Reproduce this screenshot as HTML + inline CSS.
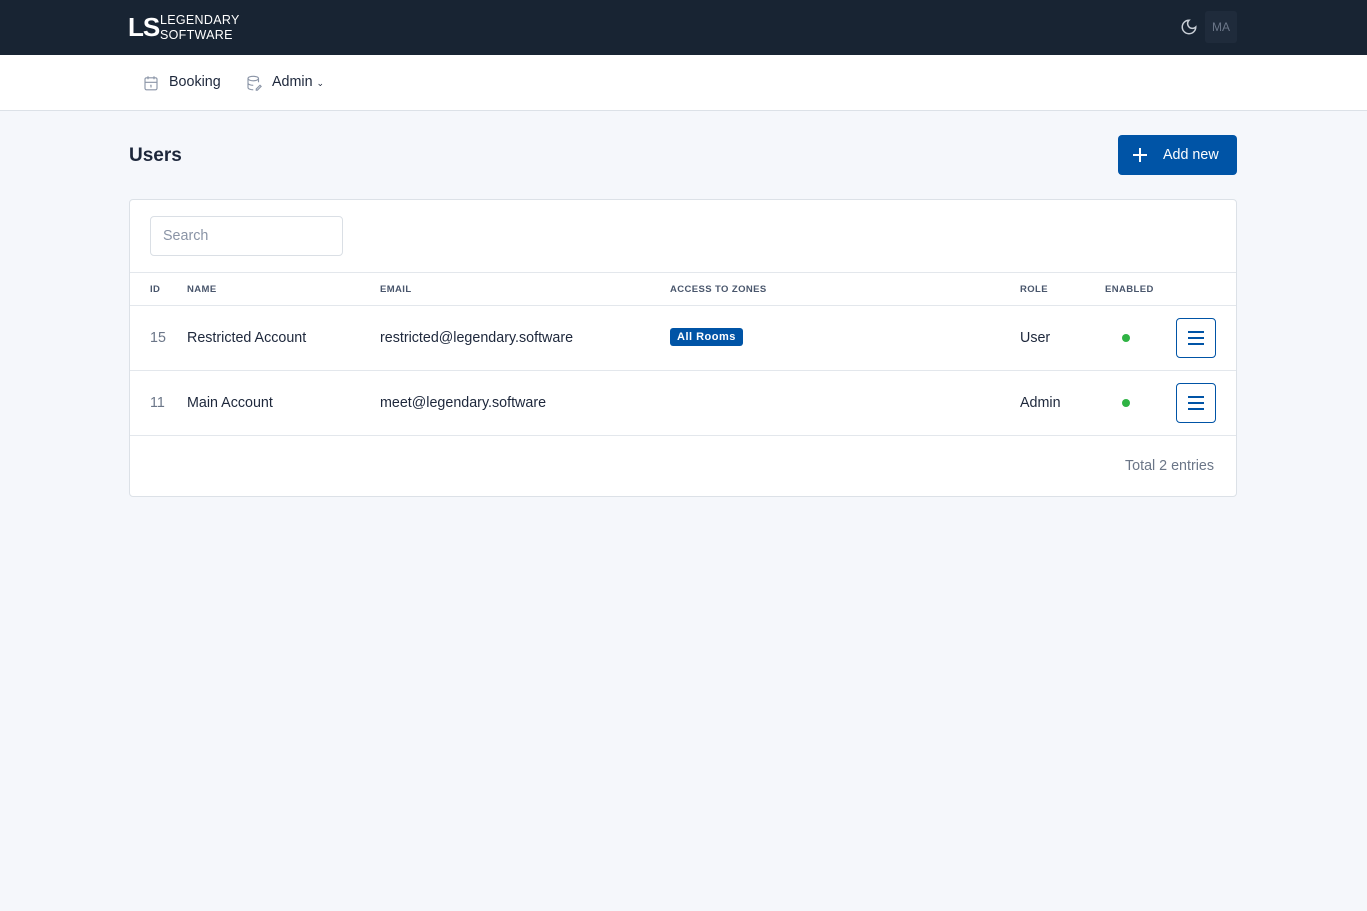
<!DOCTYPE html>
<html><head><meta charset="utf-8"><style>
*{box-sizing:border-box;margin:0;padding:0}
body{width:1367px;height:911px;background:#f5f7fb;font-family:"Liberation Sans",sans-serif;color:#1d273b;font-size:14.3px;overflow:hidden;position:relative}
.top{position:absolute;left:0;top:0;width:1367px;height:55px;background:#182433}
.nav{position:absolute;left:0;top:55px;width:1367px;height:56px;background:#fff;border-bottom:1px solid #dce1e7}
.abs{position:absolute;white-space:nowrap}
.card{position:absolute;left:129px;top:199px;width:1108px;height:298px;background:#fff;border:1px solid #dce1e7;border-radius:4px;overflow:hidden}
.th{font-size:9.5px;color:#49566c;letter-spacing:.4px;font-weight:bold}
.hl{position:absolute;left:0;width:1106px;height:1px;background:#e3e7ec}
.mb{position:absolute;left:1046px;width:40px;height:40px;border:1px solid #0054a6;border-radius:4px;background:#fff}
.mb i{position:absolute;left:11px;width:16px;height:2px;background:#0054a6}
.dot{position:absolute;left:992px;width:8px;height:8px;border-radius:50%;background:#2fb344}
</style></head><body>
<div class="top">
 <div class="abs" style="left:128px;top:14px;font-weight:bold;font-size:26px;color:#fff;letter-spacing:-1px;line-height:26px">LS</div>
 <div class="abs" style="left:160px;top:13px;color:#fff;font-size:12.5px;line-height:14.5px;letter-spacing:.3px">LEGENDARY<br>SOFTWARE</div>
 <svg class="abs" style="left:1180px;top:18px" width="18" height="18" viewBox="0 0 24 24" fill="none" stroke="#c8ced6" stroke-width="2"><path d="M12 3a6 6 0 0 0 9 9 9 9 0 1 1-9-9z"/></svg>
 <div class="abs" style="left:1205px;top:11px;width:32px;height:32px;background:#1f2b3b;border-radius:3px;color:#6b7688;font-size:12px;text-align:center;line-height:32px">MA</div>
</div>
<div class="nav">
 <svg class="abs" style="left:142px;top:19px" width="18" height="18" viewBox="0 0 24 24" fill="none" stroke="#8a94a6" stroke-width="1.5"><rect x="4" y="5" width="16" height="16" rx="2"/><path d="M16 3v4M8 3v4M4 11h16M11 15h1v3"/></svg>
 <div class="abs" style="left:169px;top:19px">Booking</div>
 <svg class="abs" style="left:245px;top:19px" width="18" height="18" viewBox="0 0 24 24" fill="none" stroke="#8a94a6" stroke-width="1.5"><ellipse cx="11" cy="6" rx="7" ry="3"/><path d="M4 6v6c0 1.7 3 3 7 3M4 12v6c0 1.7 3 3 7 3M18 6v5M15 20l5-5 1.5 1.5-5 5H15z"/></svg>
 <div class="abs" style="left:272px;top:19px">Admin <span style="font-size:9px">&#8964;</span></div>
</div>
<div class="abs" style="left:129px;top:145px;font-size:19px;font-weight:bold">Users</div>
<div class="abs" style="left:1118px;top:135px;width:119px;height:40px;background:#0054a6;border-radius:4px;color:#fff">
 <svg class="abs" style="left:14px;top:12px" width="16" height="16" viewBox="0 0 16 16" stroke="#fff" stroke-width="2"><path d="M8 1v14M1 8h14"/></svg>
 <div class="abs" style="left:45px;top:12px">Add new</div>
</div>
<div class="card">
 <div class="abs" style="left:20px;top:16px;width:193px;height:40px;border:1px solid #dadfe5;border-radius:4px;color:#8a94a6;padding:11px 12px">Search</div>
 <div class="hl" style="top:72px"></div>
 <div class="hl" style="top:105px"></div>
 <div class="th abs" style="left:20px;top:84px">ID</div>
 <div class="th abs" style="left:57px;top:84px">NAME</div>
 <div class="th abs" style="left:250px;top:84px">EMAIL</div>
 <div class="th abs" style="left:540px;top:84px">ACCESS TO ZONES</div>
 <div class="th abs" style="left:890px;top:84px">ROLE</div>
 <div class="th abs" style="left:975px;top:84px">ENABLED</div>
 <div class="abs" style="left:20px;top:130px;color:#6b7688">15</div>
 <div class="abs" style="left:57px;top:130px">Restricted Account</div>
 <div class="abs" style="left:250px;top:130px">restricted@legendary.software</div>
 <div class="abs" style="left:540px;top:128px;background:#0054a6;color:#fff;font-size:11px;font-weight:bold;padding:3px 7px;border-radius:3px;letter-spacing:.5px">All Rooms</div>
 <div class="abs" style="left:890px;top:130px">User</div>
 <div class="dot" style="top:134px"></div>
 <div class="mb" style="top:118px"><i style="top:12px"></i><i style="top:18px"></i><i style="top:24px"></i></div>
 <div class="hl" style="top:170px"></div>
 <div class="abs" style="left:20px;top:195px;color:#6b7688">11</div>
 <div class="abs" style="left:57px;top:195px">Main Account</div>
 <div class="abs" style="left:250px;top:195px">meet@legendary.software</div>
 <div class="abs" style="left:890px;top:195px">Admin</div>
 <div class="dot" style="top:199px"></div>
 <div class="mb" style="top:183px"><i style="top:12px"></i><i style="top:18px"></i><i style="top:24px"></i></div>
 <div class="hl" style="top:235px"></div>
 <div class="abs" style="left:995px;top:258px;color:#6b7688">Total 2 entries</div>
</div>
</body></html>
